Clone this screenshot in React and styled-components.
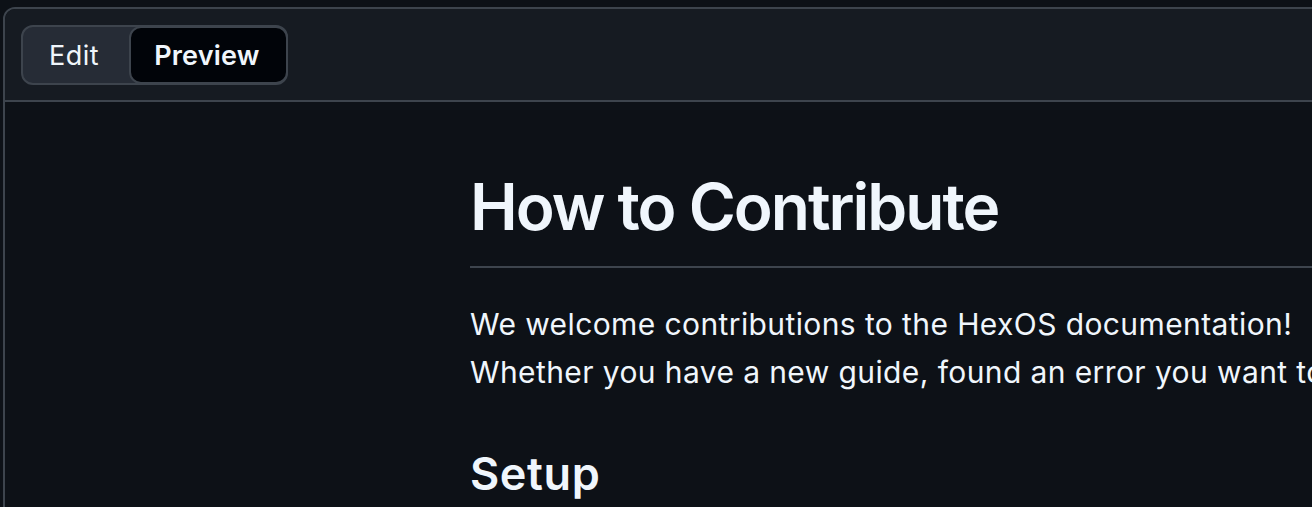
import React from "react";
import styled, { createGlobalStyle } from "styled-components";

const Global = createGlobalStyle`
  html, body {
    margin: 0;
    padding: 0;
    background: #0d1117;
    overflow: hidden;
  }
  body {
    font-family: Inter, "Noto Sans", sans-serif;
    color: #f0f6fc;
  }
`;

const Page = styled.div`
  padding: 7px 0 0 3px;
  width: 2400px;
`;

const Frame = styled.div`
  border: 2px solid #3d444d;
  border-radius: 12px;
  overflow: hidden;
  background: #0d1117;
`;

const Header = styled.div`
  display: flex;
  align-items: center;
  height: 91px;
  padding: 0 16px;
  background: #161b22;
  border-bottom: 2px solid #3d444d;
  box-sizing: content-box;
`;

const Segmented = styled.div`
  display: flex;
  height: 60px;
  box-sizing: border-box;
  background: #262c36;
  border: 2px solid #3d444d;
  border-radius: 12px;
`;

const Segment = styled.button`
  font-family: Inter, "Noto Sans", sans-serif;
  font-size: 27px;
  line-height: 1;
  letter-spacing: ${(p) => (p.$active ? "0.2px" : "0.5px")};
  font-weight: ${(p) => (p.$active ? 600 : 400)};
  color: #f0f6fc;
  background: ${(p) => (p.$active ? "#010409" : "transparent")};
  border: ${(p) => (p.$active ? "2px solid #3d444d" : "none")};
  border-radius: 12px;
  margin: ${(p) => (p.$active ? "-1px -2px -1px 0" : "0")};
  padding: ${(p) => (p.$active ? "2px 26px 0 23px" : "2px 30px 0 26px")};
  cursor: pointer;
`;

const Body = styled.div`
  padding: 65px 0 40px 465px;
`;

const Markdown = styled.article`
  width: 1900px;
`;

const H1 = styled.h1`
  margin: 0 0 32px;
  font-size: 64px;
  line-height: 80px;
  font-weight: 600;
  padding-bottom: 19px;
  border-bottom: 2px solid #3d444d;
  letter-spacing: -2px;
`;

const P = styled.p`
  margin: 0 0 32px;
  font-size: 30px;
  line-height: 48px;
  letter-spacing: 0.4px;
`;

const H2 = styled.h2`
  margin: 50px 0 0;
  font-size: 45px;
  line-height: 55px;
  font-weight: 600;
  letter-spacing: 0.6px;
`;

export default function App() {
  return (
    <>
      <Global />
      <Page>
        <Frame>
          <Header>
            <Segmented>
              <Segment>Edit</Segment>
              <Segment $active>Preview</Segment>
            </Segmented>
          </Header>
          <Body>
            <Markdown>
              <H1>How to Contribute</H1>
              <P>
                We welcome contributions to the HexOS documentation!
                <br />
                Whether you have a new guide, found an error you want to fix, or
                have suggestions for improvement, we'd love your help.
              </P>
              <H2>Setup</H2>
            </Markdown>
          </Body>
        </Frame>
      </Page>
    </>
  );
}
